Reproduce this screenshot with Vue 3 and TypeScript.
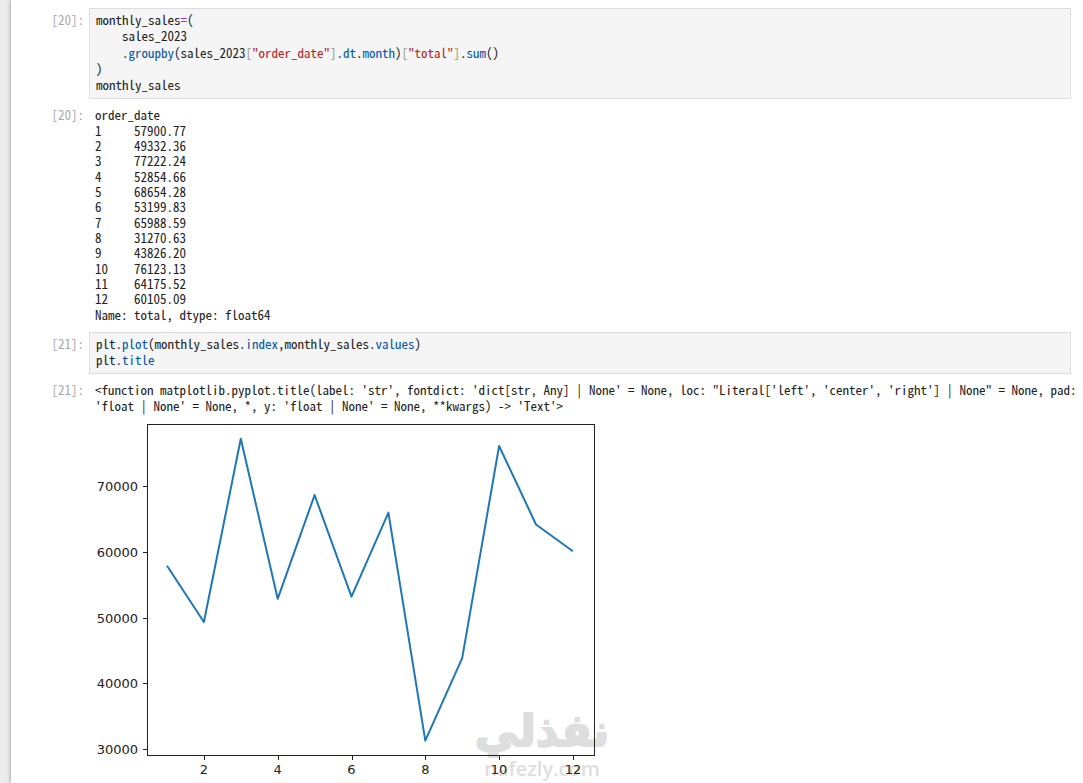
<script setup lang="ts">
interface Token {
  text: string
  kind?: 'prop' | 'str' | 'op' | 'bracket'
}

const salesCode: Token[] = [
  { text: 'monthly_sales' },
  { text: '=', kind: 'op' },
  { text: '(\n    sales_2023\n    .' },
  { text: 'groupby', kind: 'prop' },
  { text: '(sales_2023' },
  { text: '[', kind: 'bracket' },
  { text: '"order_date"', kind: 'str' },
  { text: ']', kind: 'bracket' },
  { text: '.' },
  { text: 'dt', kind: 'prop' },
  { text: '.' },
  { text: 'month', kind: 'prop' },
  { text: ')' },
  { text: '[', kind: 'bracket' },
  { text: '"total"', kind: 'str' },
  { text: ']', kind: 'bracket' },
  { text: '.' },
  { text: 'sum', kind: 'prop' },
  { text: '()\n)\nmonthly_sales' },
]

const plotCode: Token[] = [
  { text: 'plt.' },
  { text: 'plot', kind: 'prop' },
  { text: '(monthly_sales.' },
  { text: 'index', kind: 'prop' },
  { text: ',monthly_sales.' },
  { text: 'values', kind: 'prop' },
  { text: ')\nplt.' },
  { text: 'title', kind: 'prop' },
]

const totals: string[] = [
  '57900.77', '49332.36', '77222.24', '52854.66', '68654.28', '53199.83',
  '65988.59', '31270.63', '43826.20', '76123.13', '64175.52', '60105.09',
]

const seriesText = [
  'order_date',
  ...totals.map((t, i) => String(i + 1).padEnd(6) + t),
  'Name: total, dtype: float64',
].join('\n')

const signature =
  `<function matplotlib.pyplot.title(label: 'str', fontdict: 'dict[str, Any] | None' = None, loc: "Literal['left', 'center', 'right'] | None" = None, pad:\n` +
  `'float | None' = None, *, y: 'float | None' = None, **kwargs) -> 'Text'>`

const xAt = (m: number): number => 72 + (m - 1) * 36.9
const yAt = (v: number): number => 332 - (v - 30000) * 0.00657
const line = totals.map((t, i) => `${xAt(i + 1)},${yAt(Number(t))}`).join(' ')
const yTicks = [30000, 40000, 50000, 60000, 70000]
const xTicks = [2, 4, 6, 8, 10, 12]
</script>

<template>
  <main class="page">
    <div class="notebook">
      <section class="row input">
        <span class="prompt">[20]:</span>
        <pre class="editor"><span v-for="(t, i) in salesCode" :key="i" :class="t.kind">{{ t.text }}</span></pre>
      </section>
      <section class="row output">
        <span class="prompt">[20]:</span>
        <pre class="result">{{ seriesText }}</pre>
      </section>
      <section class="row input">
        <span class="prompt">[21]:</span>
        <pre class="editor"><span v-for="(t, i) in plotCode" :key="i" :class="t.kind">{{ t.text }}</span></pre>
      </section>
      <section class="row output last">
        <span class="prompt">[21]:</span>
        <pre class="result">{{ signature }}</pre>
      </section>
      <div class="figure">
        <div class="watermark">
          <span class="brand" lang="ar" dir="rtl">نفذلي</span>
          <span class="site">nafezly.com</span>
        </div>
        <svg width="520" height="366" viewBox="0 0 520 366" role="img" aria-label="Monthly sales">
          <rect x="52.5" y="7.5" width="447" height="331" class="axis" />
          <g v-for="v in yTicks" :key="v">
            <line x1="48" x2="52" :y1="Math.round(yAt(v)) + 0.5" :y2="Math.round(yAt(v)) + 0.5" class="axis" />
            <text x="43" :y="yAt(v) + 5" text-anchor="end">{{ v }}</text>
          </g>
          <g v-for="m in xTicks" :key="m">
            <line :x1="Math.round(xAt(m)) + 0.5" :x2="Math.round(xAt(m)) + 0.5" y1="339" y2="343" class="axis" />
            <text :x="xAt(m)" y="357" text-anchor="middle">{{ m }}</text>
          </g>
          <polyline :points="line" class="series" />
        </svg>
      </div>
    </div>
  </main>
</template>

<style>
body {
  margin: 0;
  background: #ececec;
}
</style>

<style scoped>
.page {
  box-sizing: border-box;
  min-height: 100vh;
  padding-left: 11px;
  background: #ececec;
}
.notebook {
  box-sizing: border-box;
  min-height: 100vh;
  padding: 8px 12px 0 0;
  background: #fff;
  box-shadow: 0 0 4px #888;
}
.row {
  display: flex;
  font: 13px "Noto Sans Mono CJK SC", "DejaVu Sans Mono", monospace;
  color: #212121;
}
.prompt {
  flex: 0 0 73px;
  margin-right: 5px;
  text-align: right;
  color: #a8a8a8;
  line-height: 1.25;
}
pre {
  flex: 1;
  min-width: 0;
  margin: 0;
  font: inherit;
}
.input .prompt {
  padding-top: 4px;
}
.editor {
  padding: 3px 6px 5px;
  border: 1px solid #dcdcdc;
  background: #f5f5f5;
  line-height: 1.25;
}
.output {
  padding: 8px 0 10px;
}
.result {
  padding-left: 6px;
  line-height: 1.18;
}
.output.last {
  padding-bottom: 4px;
}
.prop {
  color: #0055aa;
}
.str {
  color: #ba2121;
}
.op {
  color: #aa22ff;
}
.bracket {
  color: #999977;
}
.figure {
  position: relative;
  margin-left: 84px;
}
.figure svg {
  position: relative;
  display: block;
  font: 13px "DejaVu Sans", sans-serif;
  fill: #222;
}
.axis {
  fill: none;
  stroke: #222;
  stroke-width: 1;
}
.series {
  fill: none;
  stroke: #1f77b4;
  stroke-width: 2;
  stroke-linejoin: round;
}
.watermark {
  position: absolute;
  left: 380px;
  bottom: 0;
  width: 134px;
  display: flex;
  flex-direction: column;
  align-items: center;
  color: #dedede;
  white-space: nowrap;
}
.brand {
  font: bold 44px "DejaVu Sans", sans-serif;
  line-height: 48px;
  -webkit-text-stroke: 2px #dedede;
}
.site {
  font: 600 20px "Open Sans", sans-serif;
  line-height: 28px;
}
</style>
